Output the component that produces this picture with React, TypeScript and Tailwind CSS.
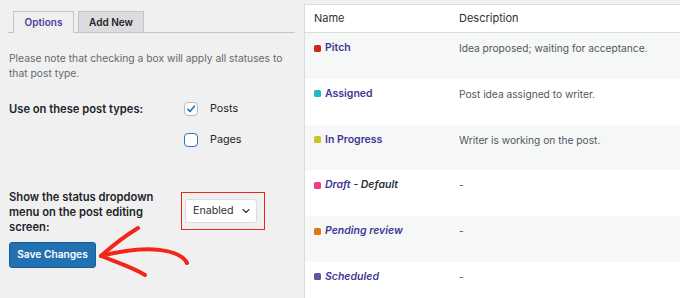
import { ChevronDown } from "lucide-react"

const statuses = [
  { name: "Pitch", color: "bg-[#d1261d]", desc: "Idea proposed; waiting for acceptance.", italic: false },
  { name: "Assigned", color: "bg-[#21b7c9]", desc: "Post idea assigned to writer.", italic: false },
  { name: "In Progress", color: "bg-[#c9c526]", desc: "Writer is working on the post.", italic: false },
  { name: "Draft", color: "bg-[#ee3b86]", desc: "-", italic: true, suffix: " - Default" },
  { name: "Pending review", color: "bg-[#e0761a]", desc: "-", italic: true },
  { name: "Scheduled", color: "bg-[#67529f]", desc: "-", italic: true },
]

const Checkbox = ({ checked }: { checked?: boolean }) => (
  <span
    className={
      checked
        ? "flex size-[14px] items-center justify-center rounded-[4px] border border-[#b8babd] bg-white"
        : "flex size-[14px] items-center justify-center rounded-[4px] border-[1.5px] border-[#2f6fb8] bg-white"
    }
  >
    {checked && (
      <svg width="10" height="10" viewBox="0 0 10 10" fill="none">
        <path d="M1.8 5.2 L4 7.4 L8.4 2.2" stroke="#2271b1" strokeWidth="1.6" strokeLinecap="round" strokeLinejoin="round" />
      </svg>
    )}
  </span>
)

export default function App() {
  return (
    <div className="relative flex h-[298px] w-[680px] overflow-hidden bg-[#f0f0f1] font-['Inter',sans-serif] text-[#1d2327]">
      {/* left settings panel */}
      <div className="w-[304px] shrink-0 pl-[8px]">
        <div className="mt-[11px] mr-[9px] flex gap-[4px] border-b border-[#c3c4c7] pl-[5px]">
          <div className="-mb-px flex h-[22px] w-[61px] items-center justify-center border border-b-0 border-[#c3c4c7] bg-[#f0f0f1] text-[10px] font-semibold text-[#4a3f9c]">
            Options
          </div>
          <div className="flex h-[21px] w-[66px] items-center justify-center border border-b-0 border-[#c3c4c7] bg-[#dcdcde] text-[10px] font-semibold text-[#1d2327]">
            Add New
          </div>
        </div>

        <p className="mt-[18px] w-[285px] pl-px text-[10.3px] leading-[15px] text-[#646970]">
          Please note that checking a box will apply all statuses to that post type.
        </p>

        <div className="mt-[20px] flex pl-px">
          <div className="w-[175px] pt-[1px] text-[11.2px] font-semibold leading-[15px]">Use on these post types:</div>
          <div className="flex flex-col gap-[16px]">
            <label className="flex items-center gap-[12px] text-[10.8px] leading-[15px]">
              <Checkbox checked />
              Posts
            </label>
            <label className="flex items-center gap-[12px] text-[10.8px] leading-[15px]">
              <Checkbox />
              Pages
            </label>
          </div>
        </div>

        <div className="mt-[43px] flex pl-px">
          <div className="w-[172px] text-[11.2px] font-semibold leading-[15px]">
            Show the status dropdown menu on the post editing screen:
          </div>
          <div className="mt-[2px] h-[38px] border-[1.5px] border-[#e8261b] pt-[6px] pr-[7px] pb-[5px] pl-[3px]">
            <div className="flex h-[24px] w-[72px] items-center justify-between rounded-[3px] border border-[#dcdcde] bg-white pr-[4px] pl-[7px] text-[10.7px] text-[#2c3338]">
              Enabled
              <ChevronDown className="size-[12px]" strokeWidth={2.2} />
            </div>
          </div>
        </div>

        <button
          type="button"
          className="mt-[7px] ml-px flex h-[26px] w-[87px] items-center justify-center rounded-[3px] border border-[#1a5d9a] bg-[#2271b1] text-[10.2px] font-semibold text-white"
        >
          Save Changes
        </button>
      </div>

      {/* statuses table */}
      <div className="mt-[4px] flex-1 border-t border-l border-[#dcdcde] bg-white">
        <div className="flex h-[28px] items-center border-b border-[#dcdcde] text-[11px] text-[#2c3338]">
          <div className="w-[154px] pl-[9px]">Name</div>
          <div>Description</div>
        </div>
        {statuses.map((s, i) => (
          <div
            key={s.name}
            className={i % 2 === 0 ? "flex h-[45.8px] items-start bg-[#f6f7f7] pt-[8px]" : "flex h-[45.8px] items-start bg-white pt-[8px]"}
          >
            <div className="flex w-[154px] items-center gap-[4px] pl-[9px] text-[10.5px] leading-[14px]">
              <span className={`size-[7px] rounded-[1.5px] ${s.color}`} />
              <span className={s.italic ? "font-semibold italic text-[#3f3896]" : "font-semibold text-[#3f3896]"}>
                {s.name}
                {s.suffix && <span className="text-[#2c3338]">{s.suffix}</span>}
              </span>
            </div>
            <div className="text-[10.2px] leading-[14px] text-[#50575e]">{s.desc}</div>
          </div>
        ))}
      </div>

      {/* red arrow annotation */}
      <svg className="pointer-events-none absolute top-0 left-0" width="680" height="298" viewBox="0 0 680 298" fill="none">
        <path d="M187 263 C 181 251, 152 243, 101 256" stroke="#f2261b" strokeWidth="4" strokeLinecap="round" />
        <path d="M101 256 C 112 246, 125 236, 138 228" stroke="#f2261b" strokeWidth="4" strokeLinecap="round" />
        <path d="M101 256 C 116 262, 132 267, 145 275" stroke="#f2261b" strokeWidth="4" strokeLinecap="round" />
      </svg>
    </div>
  )
}
